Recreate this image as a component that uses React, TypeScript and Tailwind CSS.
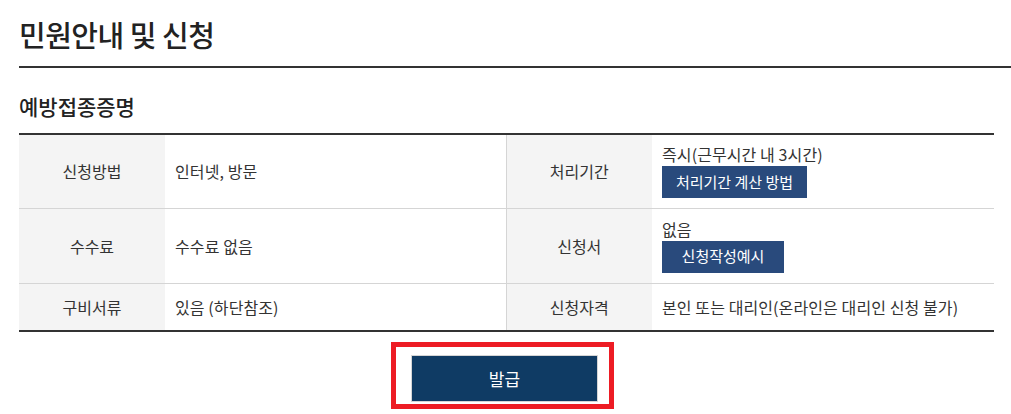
const FONT = "font-['Noto_Sans_CJK_KR','Noto_Sans',sans-serif]";

function Th({ children }: { children: React.ReactNode }) {
  return (
    <th className="w-[146px] bg-[#f4f4f4] text-center align-middle font-normal text-[16px] text-[#333]">
      {children}
    </th>
  );
}

function Td({ children, last }: { children: React.ReactNode; last?: boolean }) {
  return (
    <td
      className={
        "px-[10px] text-left align-middle text-[16px] tracking-[0.1px] text-[#333] " +
        (last ? "" : "border-r border-[#d5d5d5]")
      }
    >
      {children}
    </td>
  );
}

function SmallButton({ label, width }: { label: string; width: string }) {
  return (
    <button className={"mt-[2px] block h-[32px] bg-[#294a7c] text-center text-[15px] tracking-normal text-white " + width}>
      {label}
    </button>
  );
}

export default function App() {
  return (
    <div className={"min-h-screen bg-white text-[#333] " + FONT}>
      <div className="pl-[19px]">
        <h1 className="pt-[14px] pb-[12px] text-[29px] font-medium leading-[40px] tracking-[-0.5px] text-[#222]">
          민원안내 및 신청
        </h1>
        <div className="h-[2px] bg-[#333]" />
        <div className="pr-[17px]">
          <h2 className="pt-[23px] pb-[12px] text-[21px] font-medium leading-[30px] text-[#222]">
            예방접종증명
          </h2>
          <table className="w-full border-collapse border-t-2 border-b-2 border-[#333]">
            <colgroup>
              <col className="w-[146px]" />
              <col className="w-[341px]" />
              <col className="w-[146px]" />
              <col />
            </colgroup>
            <tbody>
              <tr className="h-[74px] border-b border-[#d5d5d5]">
                <Th>신청방법</Th>
                <Td>인터넷, 방문</Td>
                <Th>처리기간</Th>
                <Td last>
                  <div className="leading-[20px]">즉시(근무시간 내 3시간)</div>
                  <SmallButton label="처리기간 계산 방법" width="w-[145px]" />
                </Td>
              </tr>
              <tr className="h-[75px] border-b border-[#d5d5d5]">
                <Th>수수료</Th>
                <Td>수수료 없음</Td>
                <Th>신청서</Th>
                <Td last>
                  <div className="leading-[20px]">없음</div>
                  <SmallButton label="신청작성예시" width="w-[122px]" />
                </Td>
              </tr>
              <tr className="h-[48px]">
                <Th>구비서류</Th>
                <Td>있음 (하단참조)</Td>
                <Th>신청자격</Th>
                <Td last>본인 또는 대리인(온라인은 대리인 신청 불가)</Td>
              </tr>
            </tbody>
          </table>
          <div className="flex justify-center pt-[10px]">
            <div className="mr-[8px] border-[5px] border-[#ed1c24] pl-[15px] pr-[11px] pt-[8px] pb-[2px]">
              <button className="block h-[47px] w-[187px] border border-[#d5d5d5] bg-[#0f3b64] text-[17px] text-white">
                발급
              </button>
            </div>
          </div>
        </div>
      </div>
    </div>
  );
}
